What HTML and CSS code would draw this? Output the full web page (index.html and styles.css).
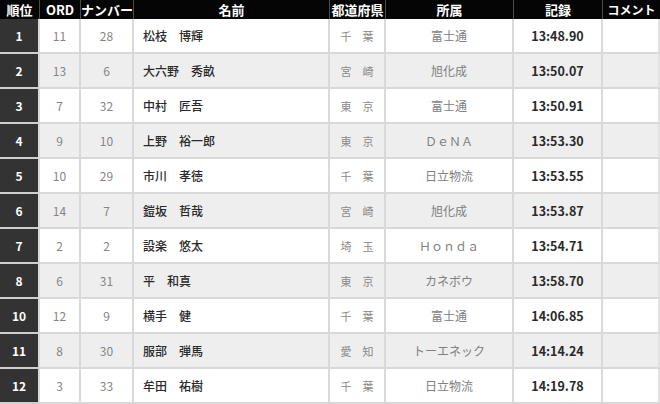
FILE: index.html
```html
<!DOCTYPE html>
<html lang="ja">
<head>
<meta charset="utf-8">
<link rel="stylesheet" href="styles.css">
</head>
<body>
<table class="results">
  <colgroup>
    <col class="c-rank"><col class="c-ord"><col class="c-num"><col class="c-name"><col class="c-pref"><col class="c-team"><col class="c-time"><col class="c-note">
  </colgroup>
  <thead>
    <tr><th>順位</th><th>ORD</th><th>ナンバー</th><th>名前</th><th>都道府県</th><th>所属</th><th>記録</th><th class="note-h">コメント</th></tr>
  </thead>
  <tbody>
    <tr><td class="rank">1</td><td class="num">11</td><td class="num">28</td><td class="name">松枝　博輝</td><td class="pref">千　葉</td><td class="team">富士通</td><td class="time">13:48.90</td><td class="note"></td></tr>
    <tr><td class="rank">2</td><td class="num">13</td><td class="num">6</td><td class="name">大六野　秀畝</td><td class="pref">宮　崎</td><td class="team">旭化成</td><td class="time">13:50.07</td><td class="note"></td></tr>
    <tr><td class="rank">3</td><td class="num">7</td><td class="num">32</td><td class="name">中村　匠吾</td><td class="pref">東　京</td><td class="team">富士通</td><td class="time">13:50.91</td><td class="note"></td></tr>
    <tr><td class="rank">4</td><td class="num">9</td><td class="num">10</td><td class="name">上野　裕一郎</td><td class="pref">東　京</td><td class="team">ＤｅＮＡ</td><td class="time">13:53.30</td><td class="note"></td></tr>
    <tr><td class="rank">5</td><td class="num">10</td><td class="num">29</td><td class="name">市川　孝徳</td><td class="pref">千　葉</td><td class="team">日立物流</td><td class="time">13:53.55</td><td class="note"></td></tr>
    <tr><td class="rank">6</td><td class="num">14</td><td class="num">7</td><td class="name">鎧坂　哲哉</td><td class="pref">宮　崎</td><td class="team">旭化成</td><td class="time">13:53.87</td><td class="note"></td></tr>
    <tr><td class="rank">7</td><td class="num">2</td><td class="num">2</td><td class="name">設楽　悠太</td><td class="pref">埼　玉</td><td class="team">Ｈｏｎｄａ</td><td class="time">13:54.71</td><td class="note"></td></tr>
    <tr><td class="rank">8</td><td class="num">6</td><td class="num">31</td><td class="name">平　和真</td><td class="pref">東　京</td><td class="team">カネボウ</td><td class="time">13:58.70</td><td class="note"></td></tr>
    <tr><td class="rank">10</td><td class="num">12</td><td class="num">9</td><td class="name">横手　健</td><td class="pref">千　葉</td><td class="team">富士通</td><td class="time">14:06.85</td><td class="note"></td></tr>
    <tr><td class="rank">11</td><td class="num">8</td><td class="num">30</td><td class="name">服部　弾馬</td><td class="pref">愛　知</td><td class="team">トーエネック</td><td class="time">14:14.24</td><td class="note"></td></tr>
    <tr><td class="rank">12</td><td class="num">3</td><td class="num">33</td><td class="name">牟田　祐樹</td><td class="pref">千　葉</td><td class="team">日立物流</td><td class="time">14:19.78</td><td class="note"></td></tr>
  </tbody>
</table>
</body>
</html>
```

FILE: styles.css
```css
html, body {
  margin: 0;
  padding: 0;
  background: #ffffff;
}
body {
  font-family: "Noto Sans CJK JP", "Noto Sans", sans-serif;
}
.results {
  width: 660px;
  table-layout: fixed;
  border-collapse: separate;
  border-spacing: 0;
}
.c-rank { width: 40px; }
.c-ord { width: 41px; }
.c-num { width: 53px; }
.c-name { width: 196px; }
.c-pref { width: 56px; }
.c-team { width: 128px; }
.c-time { width: 89px; }
.c-note { width: 57px; }

.results th {
  box-sizing: border-box;
  height: 19px;
  padding: 0;
  background: #050505;
  color: #ffffff;
  font-size: 13px;
  font-weight: 700;
  line-height: 19px;
  text-align: center;
  white-space: nowrap;
  border-right: 1px solid #4a4a4a;
}
.results th.note-h {
  border-right: none;
  font-size: 12px;
}

.results td {
  box-sizing: border-box;
  height: 35px;
  padding: 0;
  text-align: center;
  font-size: 12px;
  color: #777777;
  border-right: 2px solid #d9d9d9;
  border-bottom: 2px solid #d9d9d9;
  white-space: nowrap;
}
.results tbody tr:nth-child(even) td { background: #eeeeee; }

.results td.rank,
.results tbody tr:nth-child(even) td.rank {
  background: #333333;
  color: #ffffff;
  font-weight: 700;
  border-bottom-color: #cfcfcf;
}
.results td.num { color: #858585; }
.results td.name {
  text-align: left;
  padding-left: 9px;
  color: #2a2a2a;
  font-weight: 500;
}
.results td.pref { color: #8a8a8a; font-size: 11px; }
.results td.team { color: #808080; }
.results td.time {
  color: #2a2a2a;
  font-weight: 700;
  font-size: 12.5px;
}
.results td.note { border-right-color: #e2e2e2; }
```
